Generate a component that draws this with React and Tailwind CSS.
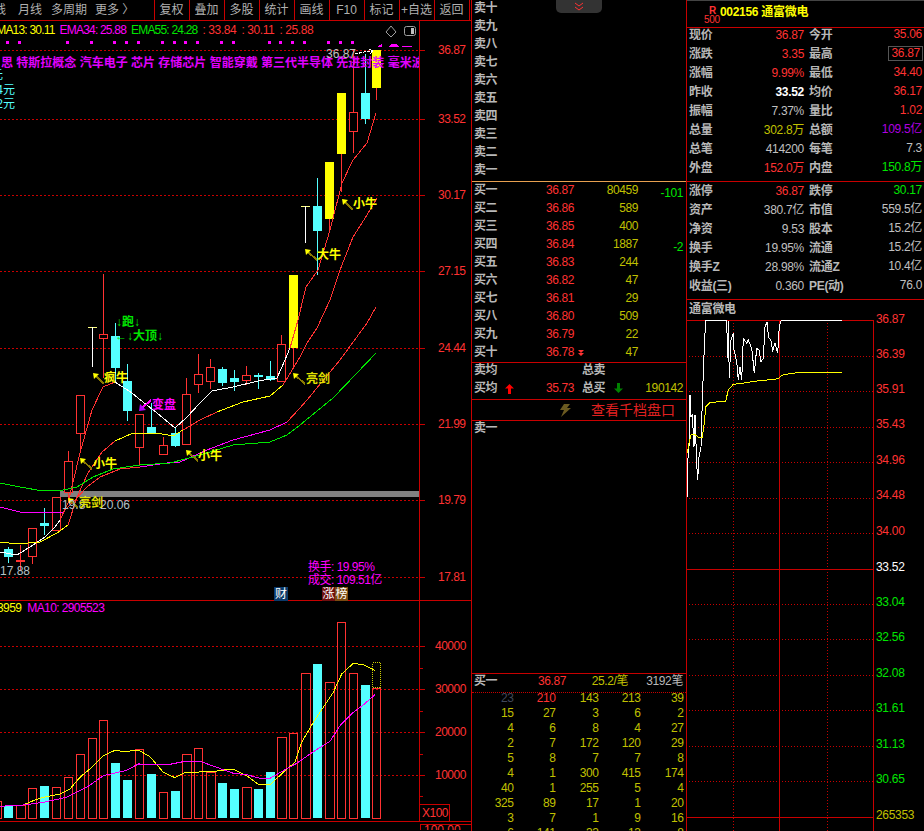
const RED = "#ff3232";
const LINE = "#c80000";
const CYAN = "#54ffff";

const toolItems = ["复权", "叠加", "多股", "统计", "画线", "F10", "标记", "+自选", "返回"];

// [center x, body top, body bottom, wick top, wick bottom, kind]
const candles = [
  [8, 549, 557, 547, 563, "c"],
  [20, 560, 561, 545, 570, "r"],
  [32, 528, 556, 528, 564, "r"],
  [44, 523, 526, 508, 535, "c"],
  [56, 497, 530, 497, 530, "r"],
  [68, 461, 492, 451, 503, "r"],
  [80, 395, 433, 395, 451, "r"],
  [92, 327, 327, 327, 367, "w"],
  [103.5, 334, 338, 274, 378, "r"],
  [115, 336, 368, 323, 383, "c"],
  [127, 381, 411, 364, 421, "c"],
  [139, 414, 447, 414, 465, "r"],
  [151, 427, 433, 403, 433, "c"],
  [163, 445, 454, 437, 454, "r"],
  [175, 433, 446, 428, 447, "c"],
  [186.5, 394, 444, 378, 444, "r"],
  [198, 374, 384, 354, 393, "r"],
  [210, 367, 381, 359, 389, "r"],
  [222, 369, 383, 367, 386, "c"],
  [234, 378, 382, 370, 391, "c"],
  [246, 375, 380, 366, 385, "r"],
  [258, 375, 377, 373, 389, "c"],
  [270, 376, 380, 361, 381, "c"],
  [281.5, 344, 381, 335, 381, "r"],
  [293, 275, 348, 275, 367, "y"],
  [305, 206, 206, 206, 243, "w"],
  [317, 206, 231, 178, 275, "c"],
  [329, 162, 219, 162, 230, "y"],
  [341, 93, 154, 93, 192, "y"],
  [353, 112, 131, 50, 153, "r"],
  [365, 93, 119, 54, 124, "c"],
  [376.5, 50, 88, 50, 100, "y"],
];

// moving averages change colour along the way, so each is a list of [colour, points]
const maLines = [
  [
    ["#ffffff", "0,552 17,555 33,545 45,537 55,527 60,520"],
    [RED, "60,520 68,503 80,453 92,410 103,387 115,382"],
    ["#ffffff", "115,382 132,393 143,402 157,413 175,428 187,417 200,403 212,391 233,387 258,381 277,378 285,360 290,348"],
    [RED, "290,348 298,320 306,287 318,270 330,230 342,183 353,160 367,143 376,113"],
  ],
  [
    ["#ffff00", "0,542 17,544 40,542 57,533 68,525"],
    [RED, "68,525 77,497 88,473 102,452 115,441"],
    ["#ffff00", "115,441 133,433 157,433 173,436 183,430"],
    [RED, "183,430 200,420 217,412"],
    ["#ffff00", "217,412 243,402 270,396 283,385"],
    [RED, "283,385 300,357 307,343 317,328 330,300 340,270 353,237 367,215 377,198"],
  ],
  [
    ["#ff00ff", "0,507 20,512 43,513 63,512"],
    [RED, "63,512 75,500 87,487 100,477 120,469 140,467"],
    ["#ff00ff", "140,467 167,463 180,462 207,450 233,440 270,430 287,422"],
    [RED, "287,422 300,408 307,400 340,360 367,323 376,307"],
  ],
  [["#00e600", "0,483 20,487 43,491 63,490 77,487 93,477 113,469 140,465 170,463 200,455 233,445 270,442 287,435 300,425 333,398 357,373 376,353"]],
];

const priceGrid = [
  [50, "36.87"],
  [119, "33.52"],
  [195, "30.17"],
  [271, "27.15"],
  [348, "24.44"],
  [424, "21.99"],
  [500, "19.79"],
  [577, "17.81"],
];

const dots = [22, 58, 202, 274, 343, 379, 415, 487, 523, 556, 592, 664, 700, 808, 841, 877, 913, 985, 1021, 1057];

// tip x, tip y, tail x, tail y
const yellowArrows = [
  [93, 373, 104, 384],
  [80, 458, 92, 469],
  [186, 450, 198, 461],
  [68, 498, 78, 508],
  [293, 373, 305, 384],
  [305, 249, 317, 260],
  [342, 199, 353, 210],
];

const chartLabels = [
  ["17.88", 0, 571, "text-[#b4c0c8]"],
  ["19.8", 62, 505, "text-[#b4c0c8]"],
  ["20.06", 100, 505, "text-[#b4c0c8]"],
  ["亮剑", 79, 503, "text-[#e0e000] font-bold"],
  ["小牛", 93, 464, "text-[#ffff00] font-bold"],
  ["小牛", 198, 456, "text-[#ffff00] font-bold"],
  ["疯牛", 104, 378, "text-[#ffff00] font-bold"],
  ["亮剑", 306, 379, "text-[#e0e000] font-bold"],
  ["大牛", 317, 255, "text-[#ffff00] font-bold"],
  ["小牛", 353, 204, "text-[#ffff00] font-bold"],
  ["变盘", 152, 405, "text-[#ff00ff] font-bold"],
  ["↓跑↓", 116, 322, "text-[#00e600] font-bold"],
  ["←↓大顶↓", 115, 336, "text-[#00e600] font-bold"],
  ["36.87", 326, 54, "text-[#c0c0c0]"],
  ["换手: 19.95%", 308, 567, "text-[#ff00ff] tracking-[-0.5px]"],
  ["成交: 109.51亿", 308, 580, "text-[#ff00ff] tracking-[-0.5px]"],
];

// left, right, top, in zoomed reference units (x/3, 580+y/3)
const volumeBars = [
  [-9, 5, 667, "r"], [12, 39, 680, "c"], [49, 75, 680, "r"], [85, 110, 628, "r"], [120, 147, 621, "c"],
  [157, 182, 625, "r"], [193, 218, 595, "r"], [229, 254, 526, "r"], [265, 290, 478, "r"], [297, 323, 424, "r"],
  [333, 360, 552, "c"], [369, 396, 603, "c"], [405, 431, 511, "r"], [441, 468, 585, "c"], [478, 503, 640, "r"],
  [513, 540, 636, "c"], [547, 573, 526, "r"], [583, 608, 508, "r"], [619, 645, 580, "r"], [654, 681, 612, "c"],
  [690, 717, 630, "c"], [727, 753, 625, "r"], [762, 789, 630, "c"], [798, 825, 579, "c"], [832, 858, 475, "r"],
  [868, 893, 463, "r"], [904, 930, 283, "r"], [939, 966, 255, "c"], [976, 1002, 310, "r"], [1012, 1037, 130, "r"],
  [1048, 1073, 283, "r"], [1083, 1110, 318, "c"], [1117, 1142, 328, "r"],
];

const volMa5 = [[70,678],[100,665],[130,655],[180,645],[210,630],[240,595],[275,565],[310,530],[345,514],[375,518],[415,513],[450,533],[490,580],[525,596],[555,580],[640,578],[660,574],[700,571],[740,590],[775,616],[810,617],[850,580],[885,550],[905,490],[940,430],[1000,340],[1025,285],[1060,253],[1090,257],[1125,274]];
const volMa10 = [[0,682],[70,678],[130,670],[200,655],[260,625],[310,590],[380,574],[415,555],[510,556],[555,547],[600,547],[650,565],[700,583],[740,587],[780,598],[810,598],[850,575],[890,553],[940,518],[990,487],[1020,440],[1060,400],[1090,378],[1125,347]];

const volPoints = (pts) => pts.map(([x, y]) => `${(x / 3).toFixed(1)},${(580 + y / 3).toFixed(1)}`).join(" ");

const volGrid = [
  [647, "40000"],
  [690, "30000"],
  [733, "20000"],
  [776, "10000"],
];

const sellLabels = ["卖十", "卖九", "卖八", "卖七", "卖六", "卖五", "卖四", "卖三", "卖二", "卖一"];
const buyRows = [
  ["买一", "36.87", "80459", "-101"],
  ["买二", "36.86", "589", ""],
  ["买三", "36.85", "400", ""],
  ["买四", "36.84", "1887", "-2"],
  ["买五", "36.83", "244", ""],
  ["买六", "36.82", "47", ""],
  ["买七", "36.81", "29", ""],
  ["买八", "36.80", "509", ""],
  ["买九", "36.79", "22", ""],
  ["买十", "36.78", "47", ""],
];

const queue = [
  [23, 210, 143, 213, 39],
  [15, 27, 3, 6, 2],
  [4, 6, 8, 4, 27],
  [2, 7, 172, 120, 29],
  [5, 8, 7, 7, 8],
  [4, 1, 300, 415, 174],
  [40, 1, 255, 5, 4],
  [325, 89, 17, 1, 20],
  [3, 7, 1, 9, 16],
  [6, 141, 33, 13, 8],
];

const quoteTop = [
  ["现价", "36.87", "text-[#ff3232]", "今开", "35.06", "text-[#ff3232]"],
  ["涨跌", "3.35", "text-[#ff3232]", "最高", "36.87", "text-[#ff3232] border border-[#555] px-[2px] -mr-[1px]"],
  ["涨幅", "9.99%", "text-[#ff3232]", "最低", "34.40", "text-[#ff3232]"],
  ["昨收", "33.52", "text-white font-bold", "均价", "36.17", "text-[#ff3232]"],
  ["振幅", "7.37%", "text-[#c0c0c0]", "量比", "1.02", "text-[#ff3232]"],
  ["总量", "302.8万", "text-[#c0c000]", "总额", "109.5亿", "text-[#b000e0]"],
  ["总笔", "414200", "text-[#c0c0c0]", "每笔", "7.3", "text-[#c0c0c0]"],
  ["外盘", "152.0万", "text-[#ff3232]", "内盘", "150.8万", "text-[#00e600]"],
];

const quoteBottom = [
  ["涨停", "36.87", "text-[#ff3232]", "跌停", "30.17", "text-[#00e600]"],
  ["资产", "380.7亿", "text-[#c0c0c0]", "市值", "559.5亿", "text-[#c0c0c0]"],
  ["净资", "9.53", "text-[#c0c0c0]", "股本", "15.2亿", "text-[#c0c0c0]"],
  ["换手", "19.95%", "text-[#c0c0c0]", "流通", "15.2亿", "text-[#c0c0c0]"],
  ["换手Z", "28.98%", "text-[#c0c0c0]", "流通Z", "10.4亿", "text-[#c0c0c0]"],
  ["收益(三)", "0.360", "text-[#c0c0c0]", "PE(动)", "76.0", "text-[#c0c0c0]"],
];

const minuteAxis = [
  [319, "36.87", "text-[#ff3232]"],
  [354, "36.39", "text-[#ff3232]"],
  [389, "35.91", "text-[#ff3232]"],
  [424, "35.43", "text-[#ff3232]"],
  [460, "34.96", "text-[#ff3232]"],
  [495, "34.48", "text-[#ff3232]"],
  [531, "34.00", "text-[#ff3232]"],
  [567, "33.52", "text-white"],
  [602, "33.04", "text-[#00e600]"],
  [637, "32.56", "text-[#00e600]"],
  [673, "32.08", "text-[#00e600]"],
  [708, "31.61", "text-[#00e600]"],
  [744, "31.13", "text-[#00e600]"],
  [779, "30.65", "text-[#00e600]"],
  [815, "265353", "text-[#c0c000]"],
];

const minuteDotted = [356, 391.5, 427.5, 462.5, 498, 533, 604, 639, 675, 710, 746, 781];

const minutePoints = (pts) => pts.map(([x, y]) => `${(685 + x / 3).toFixed(1)},${(300 + y / 3).toFixed(1)}`).join(" ");

const minutePrice = [[7,590],[8,485],[12,440],[15,285],[18,350],[22,345],[27,440],[30,345],[35,490],[38,540],[42,470],[48,440],[52,300],[58,140],[62,62],[125,62],[128,175],[130,62],[133,235],[138,120],[145,100],[147,150],[155,185],[160,240],[165,200],[170,240],[175,115],[185,130],[190,120],[200,145],[205,190],[208,220],[215,145],[222,150],[228,185],[235,175],[240,80],[247,65],[250,110],[260,125],[262,155],[270,130],[278,160],[283,80],[288,62],[470,62]];
const minuteAvg = [[7,460],[12,430],[18,405],[28,402],[40,412],[52,412],[58,370],[62,320],[75,308],[122,303],[130,270],[145,253],[170,250],[215,243],[245,240],[280,236],[290,226],[320,220],[360,216],[470,216]];

function Candle({ c }) {
  const [x, top, bottom, wickTop, wickBottom, kind] = c;
  if (kind === "w") {
    return (
      <g stroke="#ffffff">
        <line x1={x - 4.5} y1={top} x2={x + 4.5} y2={top} stroke="#ffff80" />
        <line x1={x} y1={top} x2={x} y2={wickBottom} />
      </g>
    );
  }
  const wick = kind === "c" ? CYAN : RED;
  const wickLine = <line x1={x} y1={wickTop} x2={x} y2={wickBottom} stroke={wick} />;
  if (kind === "r") {
    return (
      <g>
        {wickLine}
        <rect x={x - 4} y={top} width={8} height={bottom - top} fill="#000000" stroke={RED} />
      </g>
    );
  }
  return (
    <g>
      {wickLine}
      <rect x={x - 4.5} y={top} width={9} height={bottom - top} fill={kind === "c" ? CYAN : "#ffff00"} />
    </g>
  );
}

function PriceChart() {
  return (
    <div className="relative h-[580px] border-b border-[#c80000]">
      <svg className="absolute inset-0 h-[580px] w-[471px]" viewBox="0 21 471 580" shapeRendering="crispEdges" fill="none">
        {priceGrid.map(([y]) => (
          <line key={y} x1="0" y1={y} x2="419" y2={y} stroke={LINE} strokeDasharray="2 2" />
        ))}
        {priceGrid.map(([y]) => (
          <line key={y} x1="419" y1={y} x2="425" y2={y} stroke={LINE} />
        ))}
        <line x1="419.5" y1="21" x2="419.5" y2="601" stroke={LINE} />
        <rect x="60" y="491" width="359" height="6" fill="#808080" />
        {dots.map((d) => (
          <rect key={d} x={d / 3 - 1} y="41" width="3" height="3" fill="#ff00ff" />
        ))}
        <path d="M377 47 L382 44 L382 47 Z M388 47 L392 44 L396 44 L400 47 Z M402 46 H412 V47 H402 Z" fill="#ff00ff" />
        {candles.map((c) => (
          <Candle key={c[0]} c={c} />
        ))}
        {maLines.map((segments, i) =>
          segments.map(([color, pts], j) => <polyline key={`${i}-${j}`} points={pts} stroke={color} />)
        )}
        {yellowArrows.map(([x1, y1, x2, y2]) => (
          <g key={`${x1}-${y1}`}>
            <line x1={x1 + 2} y1={y1 + 2} x2={x2} y2={y2} stroke="#8a7a00" strokeWidth="2" />
            <path d={`M${x1} ${y1} L${x1 + 6} ${y1 + 1} L${x1 + 1} ${y1 + 6} Z`} fill="#ffff00" shapeRendering="auto" />
          </g>
        ))}
        <line x1="151" y1="400" x2="142" y2="408" stroke="#ff00ff" strokeWidth="2" />
        <path d="M139 411 L140 404 L146 410 Z" fill="#b000ff" shapeRendering="auto" />
        <polyline points="355,54 364,52 372,51" stroke="#ffffff" strokeDasharray="3 1" />
        <path d="M369 49 L373 51 L370 54" stroke="#ffffff" />
        {/* small tools, top right of the chart */}
        <path d="M391 26 L396 32 L391 37 L386 32 Z" stroke="#a0a0a0" shapeRendering="auto" />
        <rect x="404.5" y="26.5" width="11" height="9" rx="2" stroke="#a0a0a0" shapeRendering="auto" />
        <rect x="411" y="28" width="3" height="6" fill="#c0c0c0" />
      </svg>

      <div className="absolute left-0 top-[1px] flex h-[15px] w-[419px] items-center gap-[5px] overflow-hidden whitespace-nowrap text-[12px] font-medium tracking-[-0.8px]">
        <span className="-ml-[11px] text-[#ffff00]">EMA13: 30.11</span>
        <span className="text-[#ff00ff]">EMA34: 25.88</span>
        <span className="text-[#00e600]">EMA55: 24.28</span>
        <span className="tracking-[-0.4px] text-[#ff3232]">: 33.84</span>
        <span className="tracking-[-0.4px] text-[#ff3232]">: 30.11</span>
        <span className="tracking-[-0.4px] text-[#ff3232]">: 25.88</span>
      </div>
      <div className="absolute left-[1px] top-[34px] w-[418px] overflow-hidden whitespace-nowrap text-[12px] font-bold leading-[16px] text-[#e000ff]">
        思 特斯拉概念 汽车电子 芯片 存储芯片 智能穿戴 第三代半导体 先进封装 毫米波
      </div>
      <div className="absolute right-[468px] top-[47px] whitespace-nowrap text-[12px] leading-[14px] text-[#54ffff]">元</div>
      <div className="absolute right-[456px] top-[62px] whitespace-nowrap text-[12px] leading-[14px] text-[#54ffff]">4元</div>
      <div className="absolute right-[456px] top-[76px] whitespace-nowrap text-[12px] leading-[14px] text-[#54ffff]">2元</div>

      {priceGrid.map(([y, t]) => (
        <span key={y} className="absolute left-[438px] -translate-y-1/2 text-[12px] leading-[14px] tracking-[-0.5px] text-[#ff3232]" style={{ top: y - 21 }}>
          {t}
        </span>
      ))}
      {chartLabels.map(([t, x, y, cls]) => (
        <span key={`${t}-${x}`} className={`absolute -translate-y-1/2 whitespace-nowrap text-[12px] leading-[14px] ${cls}`} style={{ left: x, top: y - 21 }}>
          {t}
        </span>
      ))}

      <div className="absolute left-[274px] top-[566px] flex h-[14px] w-[14px] items-center justify-center bg-[#0a3a6b] text-[12px] text-white">财</div>
      <div className="absolute left-[322px] top-[566px] flex h-[14px] w-[13px] items-center justify-center bg-[#6e0f0f] text-[12px] text-white">涨</div>
      <div className="absolute left-[335px] top-[566px] flex h-[14px] w-[13px] items-center justify-center bg-[#7a4a10] text-[12px] text-white">榜</div>
    </div>
  );
}

function VolumeChart() {
  return (
    <div className="relative h-[221px] border-b border-[#c80000]">
      <svg className="absolute inset-0 h-[221px] w-[471px]" viewBox="0 602 471 221" shapeRendering="crispEdges" fill="none">
        {volGrid.map(([y]) => (
          <g key={y}>
            <line x1="0" y1={y} x2="419" y2={y} stroke={LINE} strokeDasharray="2 2" />
            <line x1="419" y1={y} x2="425" y2={y} stroke={LINE} />
          </g>
        ))}
        {[669, 712, 755, 797].map((y) => (
          <line key={y} x1="419" y1={y} x2="423" y2={y} stroke={LINE} />
        ))}
        <line x1="419.5" y1="602" x2="419.5" y2="823" stroke={LINE} />
        {volumeBars.map(([l, r, t, kind]) =>
          kind === "c" ? (
            <rect key={l} x={l / 3} y={580 + t / 3} width={(r - l) / 3} height={819 - (580 + t / 3)} fill={CYAN} />
          ) : (
            <rect key={l} x={l / 3} y={580 + t / 3} width={(r - l) / 3} height={819 - (580 + t / 3)} stroke={RED} />
          )
        )}
        <rect x="372.5" y="663.5" width="8" height="25" stroke="#d0d000" strokeDasharray="1 1" />
        <polyline points={volPoints(volMa5)} stroke="#ffff00" />
        <polyline points={volPoints(volMa10)} stroke="#ff00ff" />
        <rect x="419.5" y="805.5" width="30" height="17" stroke={LINE} />
      </svg>
      <div className="absolute -left-[3px] top-0 flex h-[14px] items-center gap-[6px] whitespace-nowrap text-[12px] font-medium leading-[14px] tracking-[-0.6px]">
        <span className="text-[#ffff00]">3959</span>
        <span className="text-[#ff00ff]">MA10: 2905523</span>
      </div>
      {volGrid.map(([y, t]) => (
        <span key={y} className="absolute left-[435px] -translate-y-1/2 text-[12px] leading-[14px] tracking-[-0.5px] text-[#ff3232]" style={{ top: y - 602 }}>
          {t}
        </span>
      ))}
      <span className="absolute left-[422px] top-[205px] text-[12px] leading-[14px] tracking-[-0.5px] text-[#ff3232]">X100</span>
    </div>
  );
}

function LeftColumn() {
  return (
    <div className="w-[471px] shrink-0">
      <div className="flex h-[21px] border-b border-[#c80000] text-[12px] leading-[20px] text-[#b0b0b0]">
        <div className="relative w-[153.5px] shrink-0 overflow-hidden">
          <span className="absolute -left-[6px]">线</span>
          <span className="absolute left-[18px]">月线</span>
          <span className="absolute left-[51px]">多周期</span>
          <span className="absolute left-[95px]">更多 〉</span>
        </div>
        {toolItems.map((t) => (
          <div key={t} className="w-[35px] shrink-0 whitespace-nowrap border-l border-[#c80000] text-center">
            {t}
          </div>
        ))}
        <div className="flex-1 border-l border-[#c80000]" />
      </div>
      <PriceChart />
      <VolumeChart />
      <div className="relative h-[8px] overflow-hidden">
        <div className="absolute left-[420px] top-[2px] h-[8px] w-[51px] border-l border-t border-[#c80000]" />
        <span className="absolute left-[424px] top-[1px] text-[12px] leading-[14px] text-[#ff3232]">100.00</span>
      </div>
    </div>
  );
}

function MiddleColumn() {
  return (
    <div className="relative h-[831px] w-[215px] shrink-0 overflow-hidden border-l border-[#c80000] text-[12px] tracking-[-0.4px] text-[#b8b8b8]">
      <div className="absolute left-[84px] top-0 flex h-[13px] w-[46px] items-center justify-center rounded-b-[5px] bg-[#333333]">
        <svg width="10" height="9" viewBox="0 0 10 9" fill="none" stroke="#ff3232">
          <path d="M1 1 L5 4 L9 1 M1 5 L5 8 L9 5" />
        </svg>
      </div>

      <div className="-mt-[1px]">
        {sellLabels.map((t) => (
          <div key={t} className="flex h-[18px] items-center pl-[2px] font-bold">{t}</div>
        ))}
      </div>
      <div className="mt-[2px] h-px bg-[#e8a050]" />
      <div className="-mt-[1px]">
        {buyRows.map(([label, price, vol, diff]) => (
          <div key={label} className="relative flex h-[18px] items-center">
            <span className="w-[38px] pl-[2px] font-bold">{label}</span>
            <span className="w-[64px] text-right text-[#ff3232]">{price}</span>
            <span className="w-[64px] text-right text-[#c0c000]">{vol}</span>
            <span className="absolute right-[3px] top-[3px] text-[#00e600]">{diff}</span>
          </div>
        ))}
      </div>
      <svg className="absolute left-[106px] top-[349px]" width="6" height="8" viewBox="0 0 6 8" fill="#ff3232">
        <path d="M0 1 H6 L3 4 Z M0 4 H6 L3 7 Z" />
      </svg>

      <div className="mt-[1px] h-px bg-[#c80000]" />
      <div className="-mt-[2px]">
        <div className="flex h-[18px] items-center">
          <span className="w-[110px] pl-[2px] font-bold">卖均</span>
          <span className="font-bold">总卖</span>
        </div>
        <div className="relative flex h-[18px] items-center">
          <span className="w-[38px] pl-[2px] font-bold">买均</span>
          <svg className="absolute left-[33px] top-[5px]" width="9" height="10" viewBox="0 0 9 10" fill="#ff0000">
            <path d="M4.5 0 L9 4.5 H6 V10 H3 V4.5 H0 Z" />
          </svg>
          <span className="w-[64px] text-right text-[#ff3232]">35.73</span>
          <span className="ml-[8px] font-bold">总买</span>
          <svg className="ml-[9px]" width="9" height="10" viewBox="0 0 9 10" fill="#008000">
            <path d="M3 0 H6 V5.5 H9 L4.5 10 L0 5.5 H3 Z" />
          </svg>
          <span className="ml-auto pr-[3px] text-[#c0c000]">190142</span>
        </div>
      </div>
      <div className="mt-[2px] h-px bg-[#c80000]" />
      <div className="flex h-[21px] items-center border-b border-[#c80000]">
        <svg className="ml-[87px]" width="12" height="13" viewBox="0 0 12 13" fill="#6b5a20">
          <path d="M5 0 H11 L8 4 H12 L2 13 L5 6 H1 Z" />
        </svg>
        <span className="ml-[20px] text-[14px] tracking-normal text-[#e02020]">查看千档盘口</span>
      </div>
      <div className="flex h-[13px] items-center pl-[2px] font-bold">卖一</div>

      <div className="absolute left-0 top-[673px] w-full">
        <div className="h-px bg-[#c80000]" />
        <div className="flex h-[14px] items-center">
          <span className="w-[38px] pl-[2px] font-bold">买一</span>
          <span className="w-[56px] text-right text-[#ff3232]">36.87</span>
          <span className="w-[62px] text-right text-[#c0c000]">25.2/笔</span>
          <span className="ml-auto pr-[3px]">3192笔</span>
        </div>
        <div className="mt-[4px] h-px border-t border-dotted border-[#c80000]" />
        <div className="-mt-[2px]">
          {queue.map((row, i) => (
            <div key={i} className="grid h-[15px] grid-cols-[41.5px_42px_43px_42px_43px] items-center leading-[15px]">
              {row.map((v, j) => (
                <span
                  key={j}
                  className={`text-right ${i === 0 && j === 0 ? "text-[#40485a]" : i === 0 && j === 1 ? "text-[#ff3232]" : "text-[#c0c000]"}`}
                >
                  {v}
                </span>
              ))}
            </div>
          ))}
        </div>
      </div>
    </div>
  );
}

function QuoteRow({ row }) {
  const [l1, v1, c1, l2, v2, c2] = row;
  return (
    <div className="flex h-[19px] items-center">
      <div className="flex w-[117px] items-center justify-between pl-[2px]">
        <span className="font-bold">{l1}</span>
        <span className={c1}>{v1}</span>
      </div>
      <div className="ml-[5px] flex w-[113px] items-center justify-between">
        <span className="font-bold">{l2}</span>
        <span className={`leading-[13px] ${c2}`}>{v2}</span>
      </div>
    </div>
  );
}

function RightColumn() {
  return (
    <div className="h-[831px] w-[238px] shrink-0 overflow-hidden border-l border-[#c80000] text-[12px] tracking-[-0.3px] text-[#b8b8b8]">
      <div className="relative h-[28px] border-t border-[#444] border-b-[#c80000] [border-bottom-style:solid] border-b">
        <span className="absolute left-[22px] top-[1px] text-[10px] font-bold leading-[18px] text-[#ff3232]">R</span>
        <span className="absolute left-[17px] top-[13px] text-[10px] leading-[12px] text-[#ff3232]">500</span>
        <span className="absolute left-[33px] top-[4px] whitespace-nowrap font-bold leading-[14px] text-[#ffff00]">002156 通富微电</span>
      </div>
      <div className="-mt-[3px]">
        {quoteTop.map((r) => (
          <QuoteRow key={r[0]} row={r} />
        ))}
      </div>
      <div className="mt-[4px] h-px bg-[#c80000]" />
      <div className="-mt-[1px]">
        {quoteBottom.map((r) => (
          <QuoteRow key={r[0]} row={r} />
        ))}
      </div>
      <div className="mt-[4px] h-px bg-[#c80000]" />
      <div className="flex h-[20px] items-center pb-[2px] pl-[2px] font-bold">通富微电</div>
      <div className="relative h-[511px]">
        <svg className="absolute inset-0 h-[511px] w-[238px]" viewBox="687 320 238 511" shapeRendering="crispEdges" fill="none">
          {minuteDotted.map((y) => (
            <line key={y} x1="689" y1={y} x2="873" y2={y} stroke={LINE} strokeDasharray="1 2" />
          ))}
          {[733, 827].map((x) => (
            <line key={x} x1={x} y1="320" x2={x} y2="831" stroke={LINE} strokeDasharray="1 2" />
          ))}
          <line x1="687" y1="320.5" x2="874" y2="320.5" stroke={LINE} />
          <line x1="687" y1="569.5" x2="874" y2="569.5" stroke={LINE} />
          <line x1="687" y1="817.5" x2="874" y2="817.5" stroke={LINE} />
          <line x1="779.5" y1="320" x2="779.5" y2="831" stroke={LINE} />
          <line x1="873.5" y1="320" x2="873.5" y2="831" stroke={LINE} />
          <polyline points={minutePoints(minutePrice)} stroke="#ffffff" />
          <polyline points={minutePoints(minuteAvg)} stroke="#ffff00" />
        </svg>
        {minuteAxis.map(([y, t, cls]) => (
          <span key={t} className={`absolute left-[189px] -translate-y-1/2 text-[12px] leading-[14px] tracking-[-0.3px] ${cls}`} style={{ top: y - 320 }}>
            {t}
          </span>
        ))}
      </div>
    </div>
  );
}

export default function App() {
  return (
    <div className="flex h-[831px] w-[924px] overflow-hidden bg-black font-['Liberation_Sans','Noto_Sans_CJK_SC',sans-serif]">
      <LeftColumn />
      <MiddleColumn />
      <RightColumn />
    </div>
  );
}
